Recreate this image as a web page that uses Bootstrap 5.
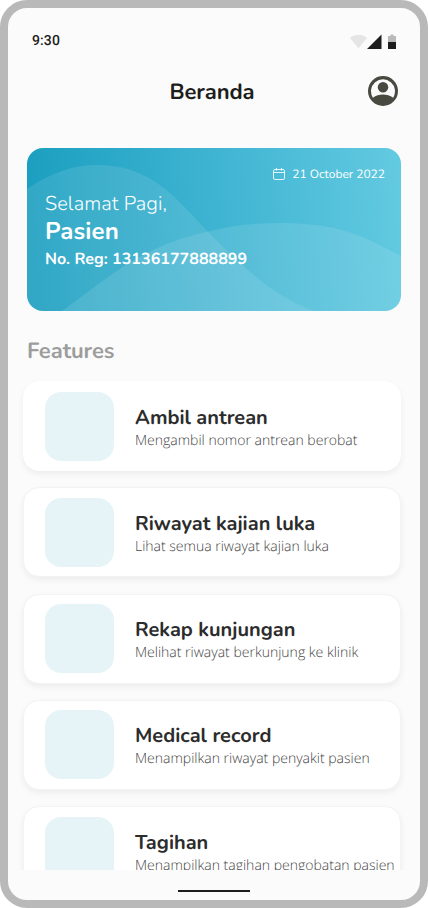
<!DOCTYPE html>
<html lang="id">
<head>
<meta charset="utf-8">
<meta name="viewport" content="width=device-width, initial-scale=1">
<title>Beranda</title>
<link href="https://cdn.jsdelivr.net/npm/bootstrap@5.3.0/dist/css/bootstrap.min.css" rel="stylesheet">
<style>
body{background:#fff;font-family:Nunito,Lato,sans-serif;color:#1d1d1b;text-rendering:geometricPrecision}
.phone{width:428px;height:908px;border:8px solid #b9b9b9;border-radius:27px;background:#fbfbfb}
.status-bar{height:64px;padding:2px 18px 0 24px;font:500 14px/62px Roboto,sans-serif;letter-spacing:.1px}
.status-bar svg{margin-right:3px;margin-top:2px}
.app-bar{height:38px;padding:0 22px 0 48px}
.app-bar h1{font-size:22px;line-height:30px;padding-top:1px;letter-spacing:-.1px}
.hero{margin:38px 19px 0 19px;height:163px;border-radius:16px;padding:16px 16px 0 18px}
.hero-art{left:0;top:0}
.hero-date{font-size:12px;line-height:20px;gap:7px;padding-top:1px}
.hero-date svg{margin-top:-2px}
.greet{font-size:20px;line-height:27px;font-weight:300;margin-top:6px;letter-spacing:.09px}
.who{font-size:24px;line-height:29px;letter-spacing:.12px}
.reg{font-size:16px;line-height:25px;letter-spacing:.05px}
.section-title{font-size:22px;line-height:30px;color:#9d9d9d;margin:25px 0 0 19px;letter-spacing:-.1px}
.features{height:504px;padding:15px 8px 0 15px;gap:16.3px}
.feature{flex:0 0 90px;width:378px;border:1px solid #f3f3f3;border-radius:16px;background:#fff;box-shadow:0 3px 6px rgba(0,0,0,.06);padding:0 0 0 21px;gap:21px}
.feature:first-child{border-color:#fff}
.thumb{width:69px;height:69px;border-radius:16px;background:#e6f4f8}
.feature-text{padding-top:4px}
.feature h3{font-size:20px;line-height:26px;color:#2c2c2c}
.feature p{font:300 14px/20px "Open Sans",sans-serif;color:#444;white-space:nowrap;margin-top:-1px}
.home-bar{width:72px;height:2px;background:#1d1d1d;margin-top:20px}
</style>
</head>
<body>
<main class="phone d-flex flex-column overflow-hidden">
  <div class="status-bar d-flex align-items-center justify-content-between flex-shrink-0">
    <span>9:30</span>
    <svg width="50" height="18" viewBox="0 0 50 18"><path d="M1 5C6 .8 13 .8 18 5L9.500 15.300Z" fill="#e5e5e5"/><path d="M18 16 32.500 1.500V16Z" fill="#1d1d1d"/><path d="M39 9V3h2.500V1.500h3V3H47v6Z" fill="#b9b9b9"/><path d="M39 9h8v7h-8Z" fill="#1d1d1d"/></svg>
  </div>
  <header class="app-bar d-flex align-items-center flex-shrink-0">
    <h1 class="flex-fill text-center fw-bold m-0">Beranda</h1>
    <svg width="30" height="30" viewBox="0 0 30 30"><circle cx="15" cy="15" r="15" fill="#484a40"/><path d="M4.900 21.700A12 12 0 1 1 25.100 21.700C22.200 19.700 18.700 18.600 15 18.600S7.800 19.700 4.900 21.700Z" fill="#fbfbfb"/><circle cx="15" cy="11.300" r="5.250" fill="#484a40"/></svg>
  </header>
  <section class="hero position-relative overflow-hidden text-white flex-shrink-0">
    <svg class="hero-art position-absolute" width="374" height="163" viewBox="0 0 374 163">
      <defs><linearGradient id="sea" gradientUnits="userSpaceOnUse" x1="0" y1="30" x2="374" y2="0"><stop offset="0" stop-color="#1b9fc0"/><stop offset=".5" stop-color="#3fb4d2"/><stop offset="1" stop-color="#63cae1"/></linearGradient></defs>
      <path d="M0 0H374V163H0Z" fill="url(#sea)"/>
      <path d="M0 41C25 24 47 17 70 17C94 17 112 23 130 35C150 48 170 73 187 90C220 122 245 147 287 163H0Z" fill="#fff" fill-opacity=".1"/>
      <path d="M35 163C62 144 88 121 120 105C145 92 171 85 197 80C217 76 235 75 254 75C276 75 296 77 315 82C337 88 355 98 374 108V163Z" fill="#fff" fill-opacity=".11"/>
    </svg>
    <div class="position-relative">
      <div class="hero-date d-flex justify-content-end align-items-center">
        <svg width="12" height="12" viewBox="0 0 12 12" fill="none" stroke="#fff" stroke-opacity=".85"><rect x=".5" y="1.500" width="11" height="10" rx="1.500"/><path d="M.5 4.500h11M3.500 0v2.500M8.500 0v2.500"/></svg>
        <span>21 October 2022</span>
      </div>
      <div class="greet">Selamat Pagi,</div>
      <div class="who fw-bold">Pasien</div>
      <div class="reg fw-bold">No. Reg: 13136177888899</div>
    </div>
  </section>
  <h2 class="section-title fw-bold mb-0">Features</h2>
  <section class="features d-flex flex-column overflow-hidden flex-shrink-0">
    <article class="feature d-flex align-items-center"><div class="thumb"></div><div class="feature-text"><h3 class="fw-bold m-0">Ambil antrean</h3><p class="mb-0">Mengambil nomor antrean berobat</p></div></article>
    <article class="feature d-flex align-items-center"><div class="thumb"></div><div class="feature-text"><h3 class="fw-bold m-0">Riwayat kajian luka</h3><p class="mb-0">Lihat semua riwayat kajian luka</p></div></article>
    <article class="feature d-flex align-items-center"><div class="thumb"></div><div class="feature-text"><h3 class="fw-bold m-0">Rekap kunjungan</h3><p class="mb-0">Melihat riwayat berkunjung ke klinik</p></div></article>
    <article class="feature d-flex align-items-center"><div class="thumb"></div><div class="feature-text"><h3 class="fw-bold m-0">Medical record</h3><p class="mb-0">Menampilkan riwayat penyakit pasien</p></div></article>
    <article class="feature d-flex align-items-center"><div class="thumb"></div><div class="feature-text"><h3 class="fw-bold m-0">Tagihan</h3><p class="mb-0">Menampilkan tagihan pengobatan pasien</p></div></article>
  </section>
  <div class="home-bar mx-auto flex-shrink-0"></div>
</main>
<script src="https://cdn.jsdelivr.net/npm/bootstrap@5.3.0/dist/js/bootstrap.bundle.min.js"></script>
</body>
</html>
